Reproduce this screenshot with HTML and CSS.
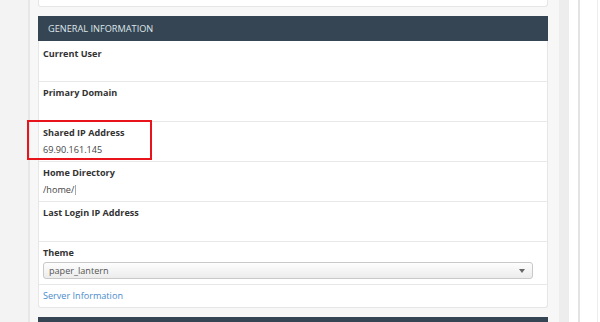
FILE: index.html
```html
<html lang="en">
<head>
    <meta charset="UTF-8">
    <meta name="viewport" content="width=device-width, initial-scale=1.0">
    <title>General Information</title>
    <link rel="stylesheet" href="styles.css">
</head>
<body>
    <div id="page">
        <div class="side-left"></div>
        <div id="main">
            <div class="card card-top"></div>

            <div class="card">
                <div class="card-head">General Information</div>
                <div class="row">
                    <div class="label">Current User</div>
                    <div class="value"></div>
                </div>
                <div class="row">
                    <div class="label">Primary Domain</div>
                    <div class="value"></div>
                </div>
                <div class="row">
                    <div class="label">Shared IP Address</div>
                    <div class="value">69.90.161.145</div>
                </div>
                <div class="row">
                    <div class="label">Home Directory</div>
                    <div class="value">/home/<span class="cursor"></span></div>
                </div>
                <div class="row">
                    <div class="label">Last Login IP Address</div>
                    <div class="value"></div>
                </div>
                <div class="row row-theme">
                    <div class="label">Theme</div>
                    <div class="select">
                        <span>paper_lantern</span>
                        <span class="arrow"></span>
                    </div>
                </div>
                <div class="row row-link">
                    <a href="#">Server Information</a>
                </div>
            </div>

            <div class="card">
                <div class="card-head"></div>
            </div>

            <div class="highlight"></div>
        </div>
        <div class="strip"></div>
        <div class="side-right"></div>
    </div>
</body>
</html>
```

FILE: styles.css
```css
*{margin:0;padding:0;box-sizing:border-box;}
body{font-family:"Open Sans","Liberation Sans",sans-serif;font-size:9.1px;color:#333;background:#fff;overflow:hidden;}

#page{display:flex;height:322px;overflow:hidden;}
.side-left{width:30px;background:#f3f3f3;border-right:2px solid #e7e7e7;}
#main{width:529px;background:#f7f7f7;padding:0 11px 0 8px;position:relative;}
.strip{width:10px;background:#ededed;}
.side-right{flex:1;background:#fff;border-left:9px solid #fff;position:relative;}
.side-right:before{content:"";position:absolute;left:0;top:0;bottom:0;width:2px;background:#e3e3e3;}
.side-right:after{content:"";position:absolute;right:2px;top:0;bottom:0;width:1px;background:#ececec;}

.card{background:#fff;border:1px solid #e6e6e6;border-top:none;border-radius:0 0 3px 3px;margin-bottom:9px;}
.card-top{height:7px;margin-bottom:9px;}

.card-head{height:25px;line-height:25px;background:#354553;color:#dfe5ea;padding-left:10px;font-size:9.2px;text-transform:uppercase;margin:0 -1px;}

.row{border-top:1px solid #e8e8e8;padding:3px 4px 0 4px;height:40px;}
.card-head + .row{border-top:none;padding-top:5px;}
.label{font-weight:bold;line-height:16px;color:#333;}
.value{line-height:17px;color:#444;min-height:17px;}
.cursor{display:inline-block;width:1px;height:10px;background:#aaa;vertical-align:-2px;margin-left:1px;}

.row-theme{height:43px;}
.select{display:flex;justify-content:space-between;align-items:center;height:17px;margin-top:1px;width:490px;border:1px solid #c9c9c9;border-radius:3px;background:linear-gradient(#fdfdfd,#ececec);padding:0 7px 0 5px;color:#555;}
.arrow{width:0;height:0;border-left:3px solid transparent;border-right:3px solid transparent;border-top:4px solid #666;}

.row-link{height:23px;padding-top:3px;line-height:16px;}
.row-link a{color:#4a8ccc;text-decoration:none;}

.highlight{position:absolute;left:-3px;top:120px;width:125px;height:40px;border:2px solid #e8141b;}
```
